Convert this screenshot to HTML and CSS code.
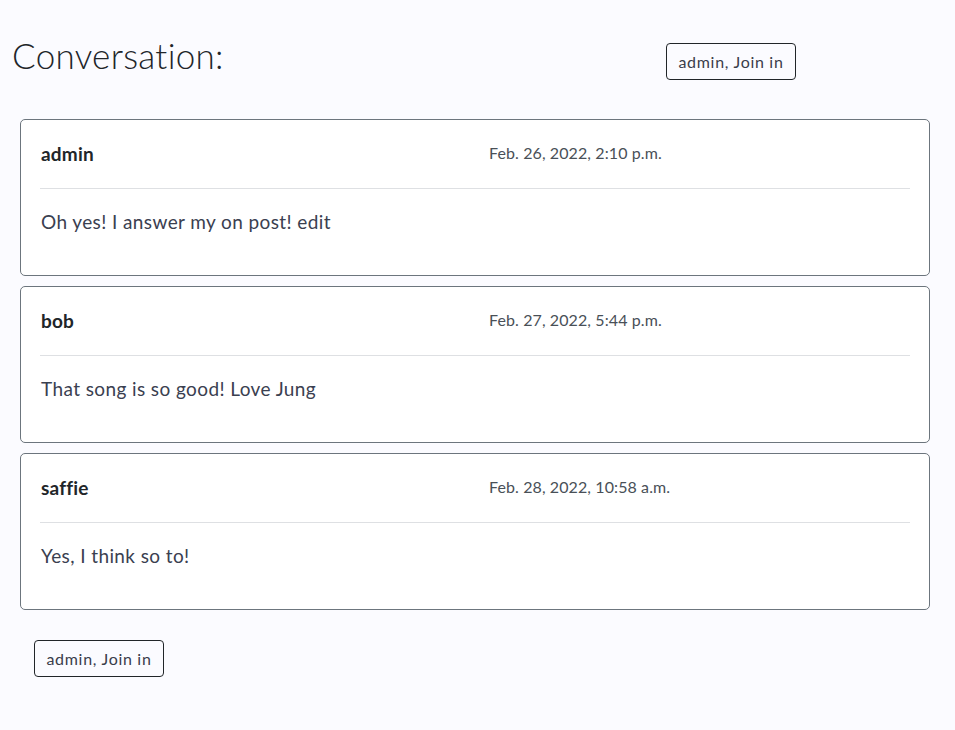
FILE: index.html
```html
<!DOCTYPE html>
<html>
<head>
<meta charset="utf-8">
<link rel="stylesheet" href="styles.css">
</head>
<body>
<div class="page">
  <div class="top">
    <h1 class="title">Conversation:</h1>
    <div class="top-action"><button class="btn">admin, Join in</button></div>
  </div>
  <div class="posts">
    <div class="card">
      <div class="card-head">
        <div class="author">admin</div>
        <div class="date">Feb. 26, 2022, 2:10 p.m.</div>
      </div>
      <hr class="sep">
      <p class="msg">Oh yes! I answer my on post! edit</p>
    </div>
    <div class="card">
      <div class="card-head">
        <div class="author">bob</div>
        <div class="date">Feb. 27, 2022, 5:44 p.m.</div>
      </div>
      <hr class="sep">
      <p class="msg">That song is so good! Love Jung</p>
    </div>
    <div class="card">
      <div class="card-head">
        <div class="author">saffie</div>
        <div class="date">Feb. 28, 2022, 10:58 a.m.</div>
      </div>
      <hr class="sep">
      <p class="msg">Yes, I think so to!</p>
    </div>
  </div>
  <div class="bottom-action"><button class="btn">admin, Join in</button></div>
</div>
</body>
</html>
```
FILE: styles.css
```css
html, body {
  margin: 0;
  padding: 0;
  background: #fbfbff;
}
body {
  font-family: "Lato", "Noto Sans", sans-serif;
  font-weight: 400;
  color: #212529;
}
.page {
  padding: 0 25px 0 12px;
}
.top {
  display: grid;
  grid-template-columns: 654px 1fr;
  align-items: start;
  padding-top: 34px;
}
.title {
  margin: 0;
  font-size: 35px;
  font-weight: 300;
  line-height: 42px;
  letter-spacing: 0.3px;
  color: #212529;
}
.top-action {
  padding-top: 9px;
}
.btn {
  font-family: inherit;
  font-weight: 400;
  font-size: 16px;
  line-height: 24px;
  letter-spacing: 0.7px;
  color: #3a3d4a;
  background: transparent;
  border: 1px solid #212529;
  border-radius: 4px;
  padding: 5px 6px;
  width: 130px;
  height: 37px;
}
.posts {
  display: flex;
  flex-direction: column;
  gap: 10px;
  padding: 39px 0 0 8px;
}
.card {
  background: #fff;
  border: 1px solid #6c757d;
  border-radius: 5px;
  padding: 19px 19px 0 19px;
  height: 157px;
  box-sizing: border-box;
}
.card-head {
  display: grid;
  grid-template-columns: 449px 1fr;
  align-items: center;
  height: 28px;
}
.author {
  font-size: 19px;
  font-weight: 700;
  color: #212529;
  padding-left: 1px;
  letter-spacing: 0.2px;
}
.date {
  font-size: 16px;
  color: #495057;
  letter-spacing: 0.1px;
  margin-top: -2px;
}
.sep {
  border: 0;
  border-top: 1px solid #dee0e3;
  margin: 21px 0 0 0;
}
.msg {
  margin: 19px 0 0 1px;
  font-size: 19px;
  line-height: 28px;
  letter-spacing: 0.4px;
  color: #3a4050;
}
.bottom-action {
  padding: 30px 0 0 22px;
}
```
